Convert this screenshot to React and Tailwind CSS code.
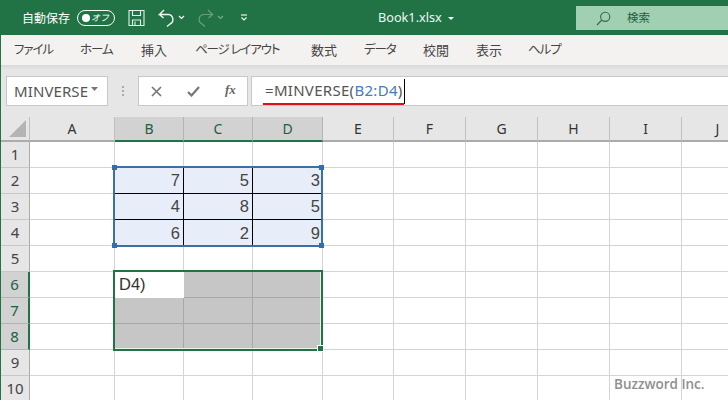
const jp = "font-['Noto_Sans_CJK_JP','Noto_Sans',sans-serif]";
const cellFont = "font-['Liberation_Sans',sans-serif]";
const tabs = [["ファイル",14,true],["ホーム",80,true],["挿入",141,false],["ページ レイアウト",195,true],["数式",311,false],["データ",364,true],["校閲",423,false],["表示",476,false],["ヘルプ",528,true]];
const cols = ["A","B","C","D","E","F","G","H","I","J"];
const rows = [1,2,3,4,5,6,7,8,9,10];
const vals = {2:[7,5,3],3:[4,8,5],4:[6,2,9]};

function Cell({ r, c }) {
  const inData = r >= 2 && r <= 4 && c >= 1 && c <= 3;
  const inResult = r >= 6 && r <= 8 && c >= 1 && c <= 3;
  const first = r === 6 && c === 1;
  let cls = "border-r border-b border-[#d4d4d4] bg-white";
  if (inData) {
    cls = `bg-[#e8eef9] flex items-center justify-end pr-[3px] text-[16.5px] text-[#444] ${cellFont} ` +
      (c < 3 ? "border-r border-r-black " : "") + (r < 4 ? "border-b border-b-black" : "");
  } else if (inResult && !first) {
    cls = "bg-[#c6c6c6] border-r border-b border-[#a8a8a8]";
  } else if (first) {
    cls = `bg-white flex items-center pl-[4px] pb-[2px] text-[16.5px] text-[#333] ${cellFont}`;
  }
  return <div className={cls}>{inData ? vals[r][c - 1] : first ? "D4)" : null}</div>;
}

export default function App() {
  return (
    <div className="w-[728px] h-[400px] overflow-hidden relative bg-white font-['Liberation_Sans',sans-serif] border-l border-[#217346]">
      {/* Title bar */}
      <div className="h-[35px] bg-[#217346] flex items-center text-white relative">
        <span className={`ml-[21px] text-[12px] ${jp}`}>自動保存</span>
        <div className="ml-[7px] w-[38px] h-[16px] rounded-full border border-white flex items-center justify-between pl-[4px] pr-[5px]">
          <div className="w-[8px] h-[8px] rounded-full bg-white" />
          <span className={`text-[9px] italic ${jp}`}>オフ</span>
        </div>
        <svg className="ml-[13px]" width="17" height="18" viewBox="0 0 17 18" fill="none" stroke="#e4efe9" strokeWidth="1.1">
          <path d="M1 1.5h15v15H1z" /><path d="M4.5 1.5v5h8v-5M4.5 16.5v-5.5h8v5.5M7 12.5v4" />
        </svg>
        <svg className="ml-[13px]" width="17" height="20" viewBox="0 0 17 20" fill="none" stroke="#f2f7f4" strokeWidth="1.4">
          <path d="M6 2 1.5 6.5h9a5 5 0 0 1 1.5 9.5l-3 2.5M1.5 6.5 5.5 10" />
        </svg>
        <svg className="ml-[3px]" width="7" height="5" viewBox="0 0 7 5" fill="none" stroke="#fff" strokeWidth="1.2"><path d="m1 1 2.5 2.5L6 1" /></svg>
        <svg className="ml-[12px] opacity-40" width="17" height="20" viewBox="0 0 17 20" fill="none" stroke="#cfe3d8" strokeWidth="1.2">
          <path d="M11 2l4.5 4.5h-9a5 5 0 0 0-1.5 9.5l3 2.5M15.5 6.5 11.5 10" />
        </svg>
        <svg className="ml-[3px] opacity-40" width="7" height="5" viewBox="0 0 7 5" fill="none" stroke="#fff" strokeWidth="1.1"><path d="m1 1 2.5 2.5L6 1" /></svg>
        <svg className="ml-[16px]" width="8" height="7" viewBox="0 0 8 7" fill="none" stroke="#fff" strokeWidth="1.1">
          <path d="M1 1h6" /><path d="M1.5 3.5 4 6l2.5-2.5" />
        </svg>
        <span className="absolute left-[377px] top-[8px] text-[12.7px] text-[#f0f6f2] font-['Noto_Sans',sans-serif]">Book1.xlsx</span>
        <svg className="absolute left-[447px] top-[17px]" width="6" height="3" viewBox="0 0 6 3"><path d="M0 0h6L3 3z" fill="#fff" /></svg>
        <div className="absolute left-[575px] top-[6px] w-[152px] h-[24px] bg-[#a0d0b1] flex items-center text-[#1d5f3c]">
          <svg className="ml-[20px]" width="15" height="15" viewBox="0 0 15 15" fill="none" stroke="#2d6c4a" strokeWidth="1.1">
            <circle cx="9.2" cy="5.8" r="4.6" /><path d="M5.8 9 1 14" />
          </svg>
          <span className={`ml-[16px] text-[11.5px] ${jp}`}>検索</span>
        </div>
      </div>
      {/* Tabs */}
      <div className={`h-[30px] bg-[#f3f2f1] relative text-[#444] [font-feature-settings:'palt'] ${jp}`}>
        {tabs.map(([t, x, kana]) => (
          <span key={t} className={`absolute top-[5px] whitespace-nowrap ${kana ? "text-[12.5px] tracking-[-1.1px]" : "text-[13px]"}`} style={{ left: x - 1 }}>{t}</span>
        ))}
      </div>
      {/* Formula bar */}
      <div className="h-[52px] bg-[#e6e6e6] bg-gradient-to-b from-[#d9d9d9] to-[#e6e6e6] to-[5px] flex items-start pt-[11px] pl-[5px]">
        <div className="w-[102px] h-[30px] bg-white border border-[#c8c8c8] flex items-center pl-[7px] text-[15px] tracking-[0.1px] text-[#555] font-['Noto_Sans',sans-serif]">
          MINVERSE
          <svg className="ml-[3px] mb-[5px]" width="7" height="4" viewBox="0 0 7 4"><path d="M0 0h7L3.5 4z" fill="#777" /></svg>
        </div>
        <div className="w-[30px] h-[30px] flex flex-col items-center justify-center gap-[2px]">
          <i className="w-[2px] h-[2px] bg-[#aaa]" /><i className="w-[2px] h-[2px] bg-[#aaa]" /><i className="w-[2px] h-[2px] bg-[#aaa]" />
        </div>
        <div className="w-[110px] h-[30px] bg-white border border-[#c8c8c8] flex items-center">
          <svg className="ml-[12px]" width="11" height="11" viewBox="0 0 11 11" fill="none" stroke="#777" strokeWidth="1.7"><path d="m1 1 9 9M10 1l-9 9" /></svg>
          <svg className="ml-[25px]" width="13" height="11" viewBox="0 0 13 11" fill="none" stroke="#777" strokeWidth="2.2"><path d="m1 6 3.5 3.5L12 1" /></svg>
          <span className="ml-[25px] mb-[2px] text-[13px] italic font-bold text-[#666] font-['Liberation_Serif',serif]">fx</span>
        </div>
        <div className="ml-[3px] flex-1 h-[30px] bg-white border border-[#c8c8c8] border-r-0 relative">
          <div className="absolute left-[13px] top-[3px] h-[20px] flex items-center text-[15px] tracking-[0.3px] text-[#555] font-['Noto_Sans',sans-serif] whitespace-pre">
            =MINVERSE(<span className="text-[#4a7ab8]">B2:D4</span>)
          </div>
          <div className="absolute left-[152px] top-[2px] w-px h-[25px] bg-black" />
          <div className="absolute left-[11px] top-[26px] w-[141px] h-[2px] bg-[#e00f14]" />
        </div>
      </div>
      {/* Sheet */}
      <div className="relative">
        <div className="grid grid-cols-[29px_85px_69px_69px_70px_71px_72px_72px_72px_72px_72px_60px] grid-rows-[25px_repeat(10,26px)] text-[#444] font-['Noto_Sans',sans-serif]">
          <div className="bg-[#e6e6e6] border-b-2 border-[#ababab] border-r border-r-[#c0c0c0] relative overflow-hidden">
            <svg className="absolute right-[3px] bottom-[3px]" width="17" height="17" viewBox="0 0 17 17"><path d="M17 0v17H0z" fill="#b4b4b4" /></svg>
          </div>
          {cols.map((c) => {
            const sel = c === "B" || c === "C" || c === "D";
            return (
              <div key={c} className={`flex items-center justify-center pb-[1px] text-[14px] ${sel ? "bg-[#d2d2d2] text-[#20603f] border-b-2 border-b-[#217346] border-r border-r-[#b4b4b4]" : "bg-[#e6e6e6] text-[#333] border-b-2 border-b-[#ababab] border-r border-r-[#c0c0c0]"}`}>{c}</div>
            );
          })}
          <div className="bg-[#e6e6e6] border-b-2 border-b-[#ababab]" />
          {rows.map((r) => (
            <div key={r} className="contents">
              <div className={`flex items-center justify-center text-[15px] ${r >= 6 && r <= 8 ? "bg-[#d2d2d2] text-[#20603f] border-r-2 border-r-[#217346] border-b border-b-[#b4b4b4]" : "bg-[#e6e6e6] border-r border-r-[#ababab] border-b border-b-[#c8c8c8]"}`}>{r}</div>
              {cols.map((_, c) => <Cell key={c} r={r} c={c} />)}
              <div className="border-b border-[#d4d4d4]" />
            </div>
          ))}
        </div>
        {/* B2:D4 reference outline */}
        <div className="absolute left-[112px] top-[49px] w-[210px] h-[81px] border-2 border-[#3d6fa5] pointer-events-none">
          {["-left-[3px] -top-[3px]", "-right-[3px] -top-[3px]", "-left-[3px] -bottom-[3px]", "-right-[3px] -bottom-[3px]"].map((p) => (
            <i key={p} className={`absolute w-[5px] h-[5px] bg-[#2f6db5] ${p}`} />
          ))}
        </div>
        {/* B6:D8 selection */}
        <div className="absolute left-[112px] top-[153px] w-[210px] h-[81px] border-2 border-[#217346] pointer-events-none">
          <div className="absolute inset-0 border-r border-b border-[#e6f2ea]" />
          <i className="absolute -right-[3px] -bottom-[3px] w-[5px] h-[5px] bg-[#217346] border border-white box-content" />
        </div>
        {/* Watermark */}
        <div className="absolute left-[613px] top-[257px] text-[13.5px] font-semibold text-[#8f8f8f] font-['Open_Sans',sans-serif]">Buzzword Inc.</div>
      </div>
    </div>
  );
}
